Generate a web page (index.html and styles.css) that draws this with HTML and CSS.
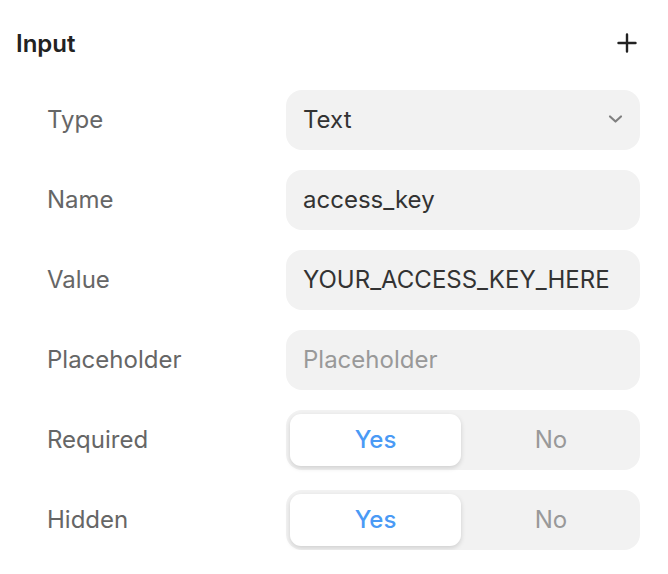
FILE: index.html
```html
<!DOCTYPE html>
<html>
<head>
<meta charset="utf-8">
<link rel="stylesheet" href="styles.css">
</head>
<body>
<div class="panel">
  <div class="header">
    <span class="title">Input</span>
    <svg class="plus" width="20" height="20" viewBox="0 0 20 20"><path d="M10 1.5v17M1.5 10h17" stroke="#222" stroke-width="2.4" stroke-linecap="round"/></svg>
  </div>
  <div class="rows">
    <div class="row">
      <div class="label">Type</div>
      <div class="field select">
        <span class="value">Text</span>
        <svg class="chev" width="15" height="10" viewBox="0 0 15 10"><path d="M2 2.5l5.5 5 5.5-5" fill="none" stroke="#808080" stroke-width="2.2" stroke-linecap="round" stroke-linejoin="round"/></svg>
      </div>
    </div>
    <div class="row">
      <div class="label">Name</div>
      <div class="field"><span class="value">access_key</span></div>
    </div>
    <div class="row">
      <div class="label">Value</div>
      <div class="field"><span class="value">YOUR_ACCESS_KEY_HERE</span></div>
    </div>
    <div class="row">
      <div class="label">Placeholder</div>
      <div class="field"><span class="value muted">Placeholder</span></div>
    </div>
    <div class="row">
      <div class="label">Required</div>
      <div class="field seg">
        <div class="opt active">Yes</div>
        <div class="opt">No</div>
      </div>
    </div>
    <div class="row">
      <div class="label">Hidden</div>
      <div class="field seg">
        <div class="opt active">Yes</div>
        <div class="opt">No</div>
      </div>
    </div>
  </div>
</div>
</body>
</html>
```
FILE: styles.css
```css
* { box-sizing: border-box; }
body {
  margin: 0;
  background: #fff;
  font-family: Inter, "Noto Sans", sans-serif;
  color: #333;
}
.panel {
  width: 668px;
  padding: 23px 28px 0 16px;
}
.header {
  display: flex;
  justify-content: space-between;
  align-items: center;
  height: 40px;
}
.title {
  font-size: 24px;
  font-weight: 600;
  color: #222;
}
.plus { margin-right: 3px; }
.rows {
  display: flex;
  flex-direction: column;
  gap: 20px;
  margin-top: 27px;
  padding-left: 31px;
}
.row {
  display: flex;
  align-items: center;
  height: 60px;
}
.label {
  width: 239px;
  font-size: 24px;
  color: #666;
  padding-bottom: 2px;
}
.field {
  width: 354px;
  height: 60px;
  background: #f2f2f2;
  border-radius: 16px;
  display: flex;
  align-items: center;
  padding: 0 17px 2px;
}
.value {
  font-size: 24px;
  color: #333;
}
.muted { color: #999; }
.select { justify-content: space-between; }
.chev { margin-right: 0; }
.seg { padding: 4px; }
.opt {
  flex: 1;
  height: 52px;
  display: flex;
  align-items: center;
  justify-content: center;
  font-size: 24px;
  color: #999;
  border-radius: 11px;
  padding: 0 0 2px 5px;
}
.opt.active {
  flex: 0 0 171px;
  padding-left: 0;
  background: #fff;
  color: #4a9af5;
  font-weight: 500;
  box-shadow: 0 2px 5px rgba(0,0,0,0.15);
}
```
